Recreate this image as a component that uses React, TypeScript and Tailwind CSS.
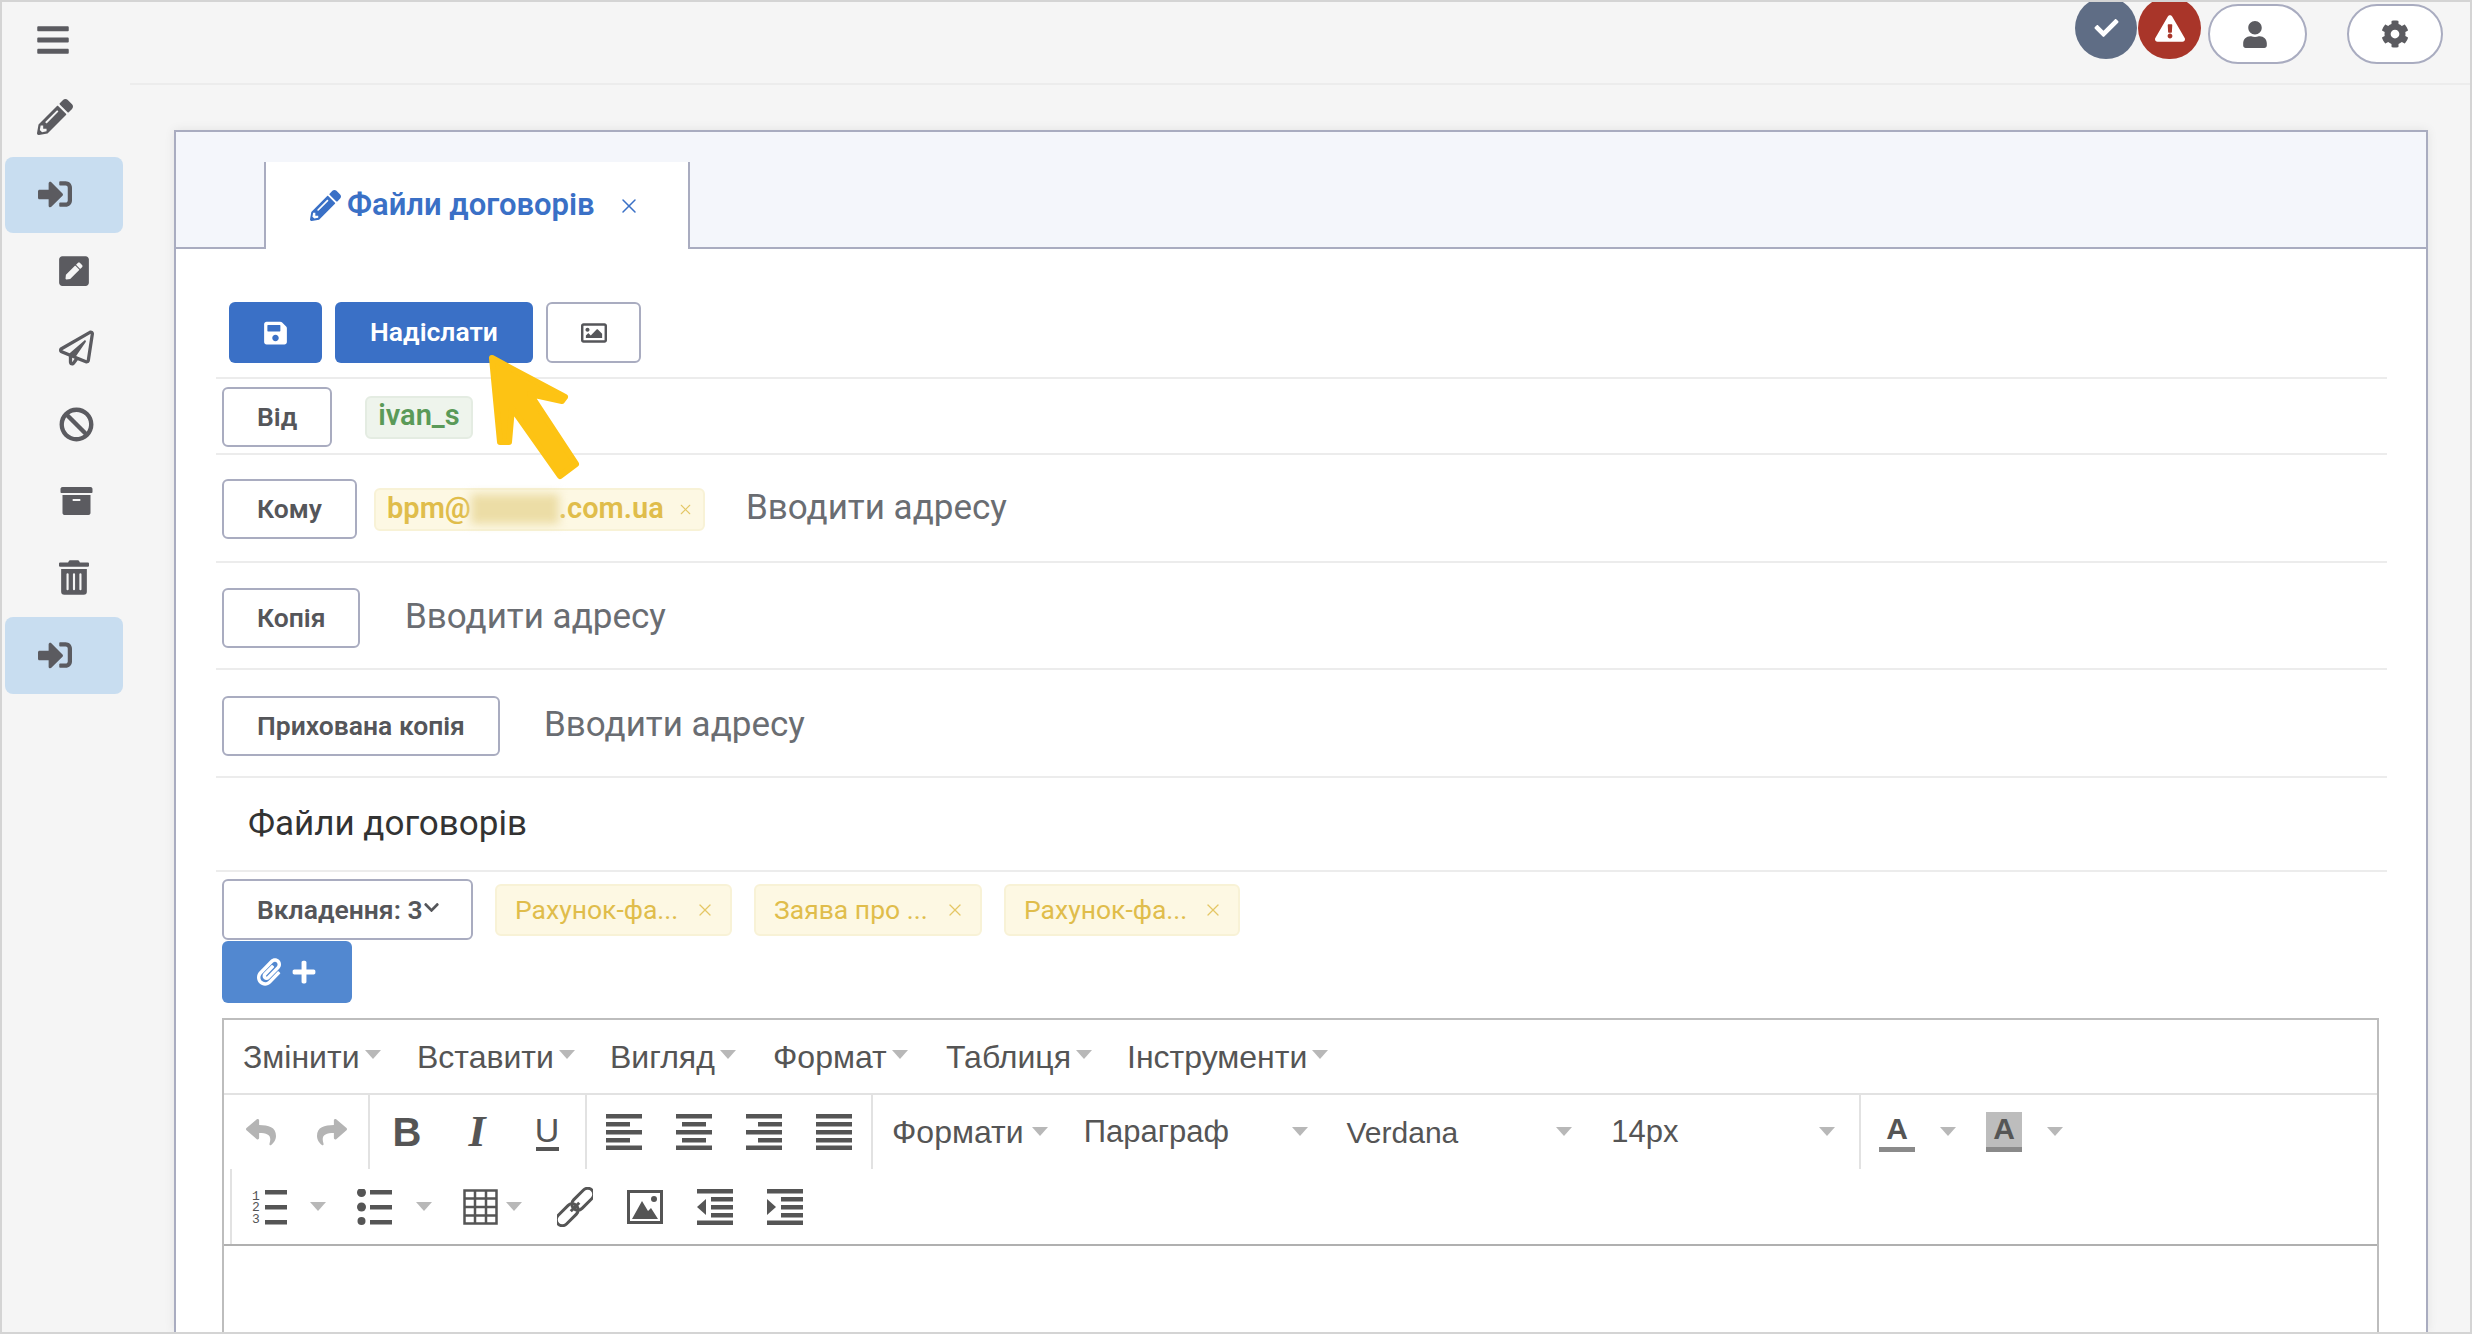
import React from 'react';
import { X } from 'lucide-react';
import {
  FaBars, FaPencilAlt, FaSignInAlt, FaPenSquare, FaRegPaperPlane, FaBan, FaArchive, FaTrashAlt,
  FaCheck, FaExclamationTriangle, FaUser, FaCog, FaSave, FaRegImage, FaPaperclip, FaPlus,
  FaChevronDown, FaReply, FaShare,
} from 'react-icons/fa';

function SideRow({ children, active = false, inset = false }: { children: React.ReactNode; active?: boolean; inset?: boolean }) {
  return (
    <div className={`ml-[3px] w-[118px] h-[76.8px] flex items-center pb-[2px] rounded-lg text-[#5b5b60] ${active ? 'bg-[#c8ddf0]' : ''} ${inset ? 'pl-[54px]' : 'pl-[32px]'}`}>
      {children}
    </div>
  );
}

function Caret() {
  return <span className="inline-block w-0 h-0 border-x-[8px] border-x-transparent border-t-[9px] border-t-[#b8b8b8]" />;
}

function LabelBtn({ children, w }: { children: React.ReactNode; w: string }) {
  return (
    <div className={`${w} h-[60px] shrink-0 flex items-center pl-[33px] pb-[1px] bg-white border-2 border-[#a9acc0] rounded-md text-[26.5px] font-semibold text-[#55565a]`}>
      {children}
    </div>
  );
}

function Placeholder() {
  return <span className="block -mt-[1px] text-[35px] text-[#6a6d72]">Вводити адресу</span>;
}

function YellowChip({ children, w }: { children: React.ReactNode; w: string }) {
  return (
    <div className={`${w} h-[52px] flex items-center justify-between pl-[18px] pr-[15px] bg-[#fdf8e3] border-2 border-[#f8f2d6] rounded-md text-[26.5px] text-[#e0bd4b]`}>
      <span>{children}</span>
      <X className="w-[20px] h-[20px] text-[#e4c765]" strokeWidth={1.5} />
    </div>
  );
}

function Align({ kind }: { kind: 'left' | 'center' | 'right' | 'full' }) {
  const short = kind === 'left' ? { x: 0, w: 24 } : kind === 'center' ? { x: 6, w: 24 } : kind === 'right' ? { x: 12, w: 24 } : { x: 0, w: 36 };
  return (
    <svg width="36" height="36" viewBox="0 0 36 36" fill="#555">
      <rect y="0" width="36" height="4.5" />
      <rect x={short.x} y="8" width={short.w} height="4.5" />
      <rect y="16" width="36" height="4.5" />
      <rect x={short.x} y="24" width={short.w} height="4.5" />
      <rect y="31.5" width="36" height="4.5" />
    </svg>
  );
}

function Lines() {
  return (
    <>
      <rect x="13" y="1" width="22" height="4.5" />
      <rect x="13" y="16" width="22" height="4.5" />
      <rect x="13" y="31" width="22" height="4.5" />
    </>
  );
}

const menuItems = [
  { label: 'Змінити', w: 'w-[174px]' },
  { label: 'Вставити', w: 'w-[193px]' },
  { label: 'Вигляд', w: 'w-[163px]' },
  { label: 'Формат', w: 'w-[173px]' },
  { label: 'Таблиця', w: 'w-[181px]' },
  { label: 'Інструменти', w: 'w-[210px]' },
];

export default function App() {
  return (
    <div className="w-[2472px] h-[1334px] overflow-hidden flex bg-[#f5f5f5] border-2 border-[#d4d4d4] font-['Roboto',sans-serif]">
      {/* Sidebar */}
      <div className="w-[123px] shrink-0 pt-[1px]">
        <SideRow><FaBars className="w-[32px] h-[36px]" /></SideRow>
        <SideRow><FaPencilAlt className="w-[36px] h-[36px]" /></SideRow>
        <SideRow active><FaSignInAlt className="w-[36px] h-[34px]" /></SideRow>
        <SideRow inset><FaPenSquare className="w-[30px] h-[34px]" /></SideRow>
        <SideRow inset><FaRegPaperPlane className="w-[35px] h-[36px]" /></SideRow>
        <SideRow inset><FaBan className="w-[35px] h-[35px]" /></SideRow>
        <SideRow inset><FaArchive className="w-[35px] h-[32px]" /></SideRow>
        <SideRow inset><FaTrashAlt className="w-[30px] h-[35px]" /></SideRow>
        <SideRow active><FaSignInAlt className="w-[36px] h-[34px]" /></SideRow>
      </div>

      <div className="flex-1 min-w-0 flex flex-col">
        {/* Top bar */}
        <div className="h-[83px] shrink-0 ml-[5px] border-b-2 border-[#ececec] flex items-start justify-end pr-[27px]">
          <div className="-mt-[5px] w-[62px] h-[62px] rounded-full bg-[#5f6d85] flex items-center justify-center text-white">
            <FaCheck className="w-[27px] h-[24px]" />
          </div>
          <div className="-mt-[5px] ml-[1px] w-[63px] h-[62px] rounded-full bg-[#a93529] flex items-center justify-center text-white">
            <FaExclamationTriangle className="w-[30px] h-[27px]" />
          </div>
          <div className="mt-[2px] ml-[7px] w-[99px] h-[60px] pr-[5px] rounded-full bg-white border-2 border-[#a9acc0] flex items-center justify-center text-[#5b5b60]">
            <FaUser className="w-[24px] h-[27px]" />
          </div>
          <div className="mt-[2px] ml-[40px] w-[96px] h-[60px] rounded-full bg-white border-2 border-[#a9acc0] flex items-center justify-center text-[#5b5b60]">
            <FaCog className="w-[28px] h-[28px]" />
          </div>
        </div>

        {/* Card */}
        <div className="relative flex-1 min-h-0 ml-[49px] mr-[42px] mt-[45px] bg-white border-2 border-b-0 border-[#a9acc0] shadow-[0_0_10px_rgba(0,0,0,0.08)]">
          <div className="h-[117px] bg-[#f4f6fb] border-b-2 border-[#a9acc0] pl-[88px] flex items-end">
            <div className="-mb-[2px] w-[426px] h-[87px] bg-white border-x-2 border-[#a9acc0] flex items-center pl-[44px] text-[#3a70c6]">
              <FaPencilAlt className="w-[31px] h-[31px]" />
              <span className="ml-[6px] text-[31px] font-semibold whitespace-nowrap">Файли договорів</span>
              <X className="ml-[22px] w-[24px] h-[24px]" strokeWidth={1.5} />
            </div>
          </div>

          <div className="pl-[40px] pr-[39px]">
            {/* Actions */}
            <div className="pt-[53px] pb-[14px] pl-[13px] flex gap-[13px] border-b-2 border-[#ececec]">
              <div className="w-[93px] h-[61px] rounded-md bg-[#3a70c6] flex items-center justify-center text-white">
                <FaSave className="w-[25px] h-[26px]" />
              </div>
              <div className="w-[198px] h-[61px] pb-[2px] rounded-md bg-[#3a70c6] flex items-center justify-center text-white text-[26.5px] font-semibold">
                Надіслати
              </div>
              <div className="w-[95px] h-[61px] rounded-md bg-white border-2 border-[#a9acc0] flex items-center justify-center text-[#55565a]">
                <FaRegImage className="w-[28px] h-[26px]" />
              </div>
            </div>

            {/* Sender */}
            <div className="pl-[6px] pt-[8px] pb-[6px] flex items-center border-b-2 border-[#ececec]">
              <LabelBtn w="w-[110px]">Від</LabelBtn>
              <div className="ml-[33px] w-[108px] h-[43px] pb-[2px] flex items-center justify-center rounded-md bg-[#eef4ec] border-2 border-[#e4ece2] text-[29px] font-semibold text-[#5a9a58]">
                ivan_s
              </div>
            </div>

            <div className="pl-[6px] pt-[24px] pb-[22px] flex items-center border-b-2 border-[#ececec]">
              <LabelBtn w="w-[135px]">Кому</LabelBtn>
              <div className="ml-[17px] w-[331px] h-[43px] flex items-center pl-[11px] rounded-md bg-[#fdf8e3] border-2 border-[#f8f2d6] text-[29px] font-semibold text-[#e0bd4b]">
                <span>bpm@</span>
                <span className="w-[88px] h-[30px] bg-[#ecdda6] blur-[5px]" />
                <span>.com.ua</span>
                <X className="ml-[13px] w-[17px] h-[17px] text-[#e4c765]" strokeWidth={1.5} />
              </div>
              <div className="ml-[41px]"><Placeholder /></div>
            </div>

            <div className="pl-[6px] pt-[25px] pb-[20px] flex items-center border-b-2 border-[#ececec]">
              <LabelBtn w="w-[138px]">Копія</LabelBtn>
              <div className="ml-[45px]"><Placeholder /></div>
            </div>

            <div className="pl-[6px] pt-[26px] pb-[20px] flex items-center border-b-2 border-[#ececec]">
              <LabelBtn w="w-[278px]">Прихована копія</LabelBtn>
              <div className="ml-[44px]"><Placeholder /></div>
            </div>

            <div className="h-[94px] pl-[32px] flex items-center border-b-2 border-[#ececec] text-[35px] text-[#333]">
              Файли договорів
            </div>

            {/* Attachments */}
            <div className="pl-[6px] pt-[7px] flex items-center">
              <div className="w-[251px] h-[61px] shrink-0 flex items-center pl-[33px] bg-white border-2 border-[#a9acc0] rounded-md text-[26.5px] font-semibold text-[#55565a]">
                Вкладення: 3
                <FaChevronDown className="w-[17px] h-[17px] -mt-[4px]" />
              </div>
              <div className="ml-[22px] flex gap-[22px]">
                <YellowChip w="w-[237px]">Рахунок-фа...</YellowChip>
                <YellowChip w="w-[228px]">Заява про ...</YellowChip>
                <YellowChip w="w-[236px]">Рахунок-фа...</YellowChip>
              </div>
            </div>
            <div className="ml-[6px] mt-[1px] w-[130px] h-[62px] rounded-md bg-[#5288d0] flex items-center justify-center gap-[10px] text-white">
              <FaPaperclip className="w-[24px] h-[30px]" />
              <FaPlus className="w-[26px] h-[26px]" />
            </div>

            {/* Editor */}
            <div className="ml-[6px] mr-[8px] mt-[15px] h-[400px] border-2 border-[#bdbdbd] font-['Liberation_Sans',sans-serif] text-[#555]">
              <div className="h-[75px] border-b-2 border-[#e2e2e2] flex items-center pl-[19px] text-[32px]">
                {menuItems.map((item) => (
                  <div key={item.label} className={`${item.w} shrink-0 flex items-center gap-[5px]`}>
                    {item.label}
                    <span className="-mt-[4px] flex"><Caret /></span>
                  </div>
                ))}
              </div>

              <div className="h-[74px] flex">
                <div className="w-[146px] shrink-0 border-r-2 border-[#e2e2e2] flex items-center pl-[22px] gap-[41px] text-[#b4b4b4]">
                  <FaReply className="w-[30px] h-[32px]" />
                  <FaShare className="w-[30px] h-[32px]" />
                </div>
                <div className="w-[217px] shrink-0 border-r-2 border-[#e2e2e2] flex items-center pl-[2px]">
                  <span className="w-[70px] text-center text-[40px] font-bold leading-none">B</span>
                  <span className="w-[70px] text-center text-[44px] font-bold italic leading-none font-['Liberation_Serif',serif]">I</span>
                  <span className="w-[70px] flex justify-center">
                    <span className="w-[23px] flex justify-center border-b-[4px] border-[#555] text-[34px] leading-[34px]">U</span>
                  </span>
                </div>
                <div className="w-[286px] shrink-0 border-r-2 border-[#e2e2e2] flex items-center pl-[19px] gap-[34px]">
                  <Align kind="left" />
                  <Align kind="center" />
                  <Align kind="right" />
                  <Align kind="full" />
                </div>
                <div className="w-[988px] shrink-0 border-r-2 border-[#e2e2e2] flex items-center pl-[19px]">
                  <div className="w-[192px] flex items-center gap-[8px] text-[32px]">Формати<span className="-mt-[2px] flex"><Caret /></span></div>
                  <div className="w-[263px] pr-[39px] flex items-center justify-between text-[31px]">Параграф<span className="-mt-[2px] flex"><Caret /></span></div>
                  <div className="w-[265px] pr-[39px] flex items-center justify-between text-[30px]">Verdana<span className="-mt-[2px] flex"><Caret /></span></div>
                  <div className="w-[248px] pr-[24px] flex items-center justify-between text-[31px]">14px<span className="-mt-[2px] flex"><Caret /></span></div>
                </div>
                <div className="flex items-center pl-[18px]">
                  <span className="w-[36px] h-[40px] flex items-start justify-center border-b-[5px] border-[#8a8a8a] text-[30px] font-bold leading-[34px]">A</span>
                  <span className="ml-[25px] -mt-[2px] flex"><Caret /></span>
                  <span className="ml-[30px] w-[36px] h-[40px] flex items-start justify-center bg-[#bdbdbd] border-b-[5px] border-[#8a8a8a] text-[30px] font-bold leading-[34px]">A</span>
                  <span className="ml-[25px] -mt-[2px] flex"><Caret /></span>
                </div>
              </div>

              <div className="h-[75px] ml-[6px] border-l-2 border-[#e2e2e2] flex items-center pl-[20px]">
                <svg width="35" height="36" viewBox="0 0 35 36" fill="#555" className="mr-[23px]">
                  <Lines />
                  <text x="0" y="10.5" fontSize="13" fontFamily="Liberation Mono">1</text>
                  <text x="0" y="22" fontSize="13" fontFamily="Liberation Mono">2</text>
                  <text x="0" y="33.5" fontSize="13" fontFamily="Liberation Mono">3</text>
                </svg>
                <Caret />
                <svg width="35" height="36" viewBox="0 0 35 36" fill="#555" className="ml-[31px] mr-[24px]">
                  <Lines />
                  <circle cx="4.5" cy="3.5" r="4.5" />
                  <circle cx="4.5" cy="18" r="4.5" />
                  <circle cx="4.5" cy="32" r="4" />
                </svg>
                <Caret />
                <svg width="35" height="36" viewBox="0 0 35 36" fill="none" stroke="#555" strokeWidth="2.5" className="ml-[31px] mr-[8px]">
                  <rect x="1.5" y="1.5" width="32" height="33" />
                  <path d="M1.5 9.5h32M1.5 18h32M1.5 26.5h32M12 1.5v33M23 1.5v33" />
                </svg>
                <Caret />
                <svg width="36" height="40" viewBox="0 0 36 40" fill="none" stroke="#555" strokeWidth="3" className="ml-[35px]">
                  <g transform="rotate(-45 18 20)">
                    <rect x="-6" y="14" width="26" height="12" rx="6" />
                    <rect x="16" y="14" width="26" height="12" rx="6" />
                    <path d="M12 20h12" />
                  </g>
                </svg>
                <svg width="36" height="34" viewBox="0 0 36 34" className="ml-[34px]">
                  <rect x="1.5" y="1.5" width="33" height="31" fill="none" stroke="#555" strokeWidth="3" />
                  <path d="M5 29 L15 11 L21 21 L24 18 L31 29 Z" fill="#555" />
                  <circle cx="27" cy="9" r="3" fill="#555" />
                </svg>
                <svg width="36" height="36" viewBox="0 0 36 36" fill="#555" className="ml-[34px]">
                  <rect width="36" height="4.5" />
                  <rect x="14" y="8" width="22" height="4.5" />
                  <rect x="14" y="16" width="22" height="4.5" />
                  <rect x="14" y="24" width="22" height="4.5" />
                  <rect y="31.5" width="36" height="4.5" />
                  <path d="M9 10v16L0 18z" />
                </svg>
                <svg width="36" height="36" viewBox="0 0 36 36" fill="#555" className="ml-[34px]">
                  <rect width="36" height="4.5" />
                  <rect x="14" y="8" width="22" height="4.5" />
                  <rect x="14" y="16" width="22" height="4.5" />
                  <rect x="14" y="24" width="22" height="4.5" />
                  <rect y="31.5" width="36" height="4.5" />
                  <path d="M0 10v16l9-8z" />
                </svg>
              </div>
              <div className="border-t-2 border-[#b0b0b0]" />
            </div>
          </div>

          {/* Pointer arrow */}
          <svg width="110" height="140" viewBox="0 0 110 140" className="absolute left-[308px] top-[218px]" fill="#fdc314" stroke="#fdc314" strokeWidth="6" strokeLinejoin="round">
            <path d="M8 8 L81 47 L78 51 L46 44 L92 114 L76 126 L28 58 L25 92 L16 92 Z" />
          </svg>
        </div>
      </div>
    </div>
  );
}
